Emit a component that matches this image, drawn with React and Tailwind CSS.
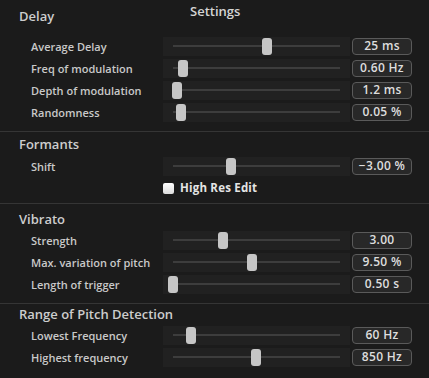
import React from "react";

function Slider({ c }) {
  return (
    <div className="relative w-[187px] h-[19px] bg-[#212121]">
      <div className="absolute left-[10px] right-[10px] top-[8px] h-[2px] bg-[#3d3d3d]" />
      <div
        className="absolute top-[1px] w-[10px] h-[17px] rounded-[3px] bg-[#c6c6c6]"
        style={{ left: c - 163 - 5 }}
      />
    </div>
  );
}

function Row({ label, c, value }) {
  return (
    <div className="flex items-center h-[22px]">
      <div className="w-[163px] pl-[31px] text-[11px] font-semibold text-[#c9c9c9] leading-none">
        {label}
      </div>
      <Slider c={c} />
      <div className="ml-[2px] w-[60px] h-[17px] flex items-center justify-center rounded-[4px] border border-[#5a5a5a] bg-[#282828] text-[12px] tracking-[0.3px] font-semibold text-[#dedede] leading-none">
        {value}
      </div>
    </div>
  );
}

function Heading({ children, className }) {
  return (
    <div className={"pl-[19px] text-[13px] font-semibold text-[#cdcdcd] leading-[20px] " + className}>
      {children}
    </div>
  );
}

export default function App() {
  return (
    <div className="w-[429px] h-[378px] bg-[#1b1b1b] overflow-hidden font-['Open_Sans',sans-serif]">
      <section className="h-[131px]">
        <div className="flex items-start h-[35px] pt-[1px]">
          <div className="w-[190px] pl-[19px] mt-[5px] text-[13px] font-semibold text-[#cdcdcd] leading-[20px]">
            Delay
          </div>
          <div className="text-[13px] font-semibold text-[#d4d4d4] leading-[20px]">Settings</div>
        </div>
        <Row label="Average Delay" c={267} value="25 ms" />
        <Row label="Freq of modulation" c={183} value="0.60 Hz" />
        <Row label="Depth of modulation" c={177} value="1.2 ms" />
        <Row label="Randomness" c={181} value="0.05 %" />
      </section>
      <div className="h-px bg-[#353535]" />
      <section className="h-[71px]">
        <Heading className="pt-[2px] h-[23px]">Formants</Heading>
        <Row label="Shift" c={231} value="−3.00 %" />
        <div className="flex items-center h-[22px] pl-[163px]">
          <div className="w-[11px] h-[11px] rounded-[2px] bg-gradient-to-b from-[#ffffff] to-[#dcdcdc]" />
          <span className="ml-[6px] text-[11.5px] tracking-[0.2px] font-bold text-[#e4e4e4] leading-none">High Res Edit</span>
        </div>
      </section>
      <div className="h-px bg-[#353535]" />
      <section className="h-[99px]">
        <Heading className="pt-[5px] h-[25px]">Vibrato</Heading>
        <Row label="Strength" c={223} value="3.00" />
        <Row label="Max. variation of pitch" c={252} value="9.50 %" />
        <Row label="Length of trigger" c={173} value="0.50 s" />
      </section>
      <div className="h-px bg-[#353535]" />
      <section>
        <Heading className="h-[20px]">Range of Pitch Detection</Heading>
        <Row label="Lowest Frequency" c={191} value="60 Hz" />
        <Row label="Highest frequency" c={256} value="850 Hz" />
      </section>
    </div>
  );
}
